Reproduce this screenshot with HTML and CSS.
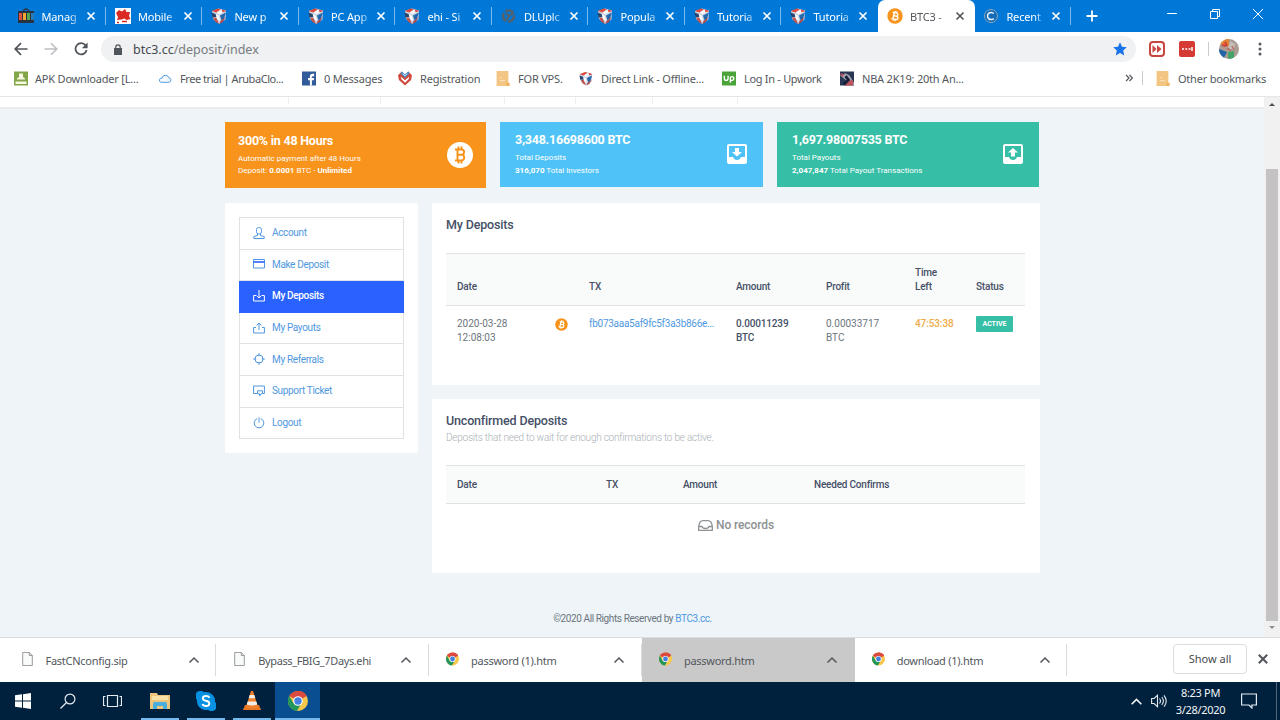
FILE: index.html
```html
<!doctype html>
<html lang="en">
    <head>
        <meta charset="utf-8">
        <title>BTC3 - My Deposits</title>
        <link rel="stylesheet" href="styles.css">
    </head>

    <body>
        <svg class="symbols" width="0" height="0">
            <symbol id="close" viewBox="0 0 10 10"><path d="M1.5 1.5l7 7M8.5 1.5l-7 7" fill="none" stroke="currentColor" stroke-width="1.7"/></symbol>
            <symbol id="cube" viewBox="0 0 16 16">
                <path d="M1 3l7-2.500 7 2-.5 9L8 16l-6-5z" fill="#c9d3e2"/>
                <path d="M.5 3L7 .500l3 1L5.500 4.500zM11 1.500l4.500 1.500L11 4.500z" fill="#dd4a3b"/>
                <path d="M5.500 4.500L10 1.500l2 3L8 6.500z" fill="#f4f6fa"/>
                <path d="M.5 4.500l4 1.500 1 3-4 .5z" fill="#26456f"/>
                <path d="M2 9.500l3.500.5L8 16l-4-2.500z" fill="#c2504b"/>
                <path d="M9 7.500l6-3-2 6-2.500 2z" fill="#2467ad"/>
                <path d="M5 6l3 2 1 5-3-2z" fill="#fff"/>
                <path d="M14.500 9L12 14l-3.500 2 1-3z" fill="#a94a50"/>
            </symbol>
            <symbol id="bitcoin" viewBox="0 0 16 16">
                <circle cx="8" cy="8" r="7.700" fill="#f7931a"/>
                <g transform="rotate(12 8 8)" fill="none" stroke="#fff" stroke-width="1.400"><path d="M5 4.800h4a1.500 1.500 0 0 1 0 3.100H6.500M6.500 7.900h3a1.700 1.700 0 0 1 0 3.400H5M6.600 4.800v6.500M7.200 3v2M9 3v2M7.200 11v2M9 11v2"/></g>
            </symbol>
            <symbol id="folder" viewBox="0 0 12 14"><path d="M0 0h11v11l1 .5V14H0z" fill="#f3c583"/><path d="M3 9h5M3 6h2" stroke="#fadfb5"/><path d="M9 11h3v3H9z" fill="#efb45e"/></symbol>
            <symbol id="chrome" viewBox="0 0 20 20">
                <circle cx="10" cy="10" r="10" fill="#f9c74b"/>
                <path d="M10 10L1.340 5A10 10 0 0 1 18.660 5z" fill="#db4a3e"/>
                <path d="M10 0a10 10 0 0 1 8.660 5H10z" fill="#db4a3e"/>
                <path d="M1.340 5A10 10 0 0 0 9 20l4.300-7.500L10 10 5.700 12.500z" fill="#23965a"/>
                <circle cx="10" cy="10" r="4.800" fill="#fff"/><circle cx="10" cy="10" r="3.700" fill="#427fe0"/>
            </symbol>
            <symbol id="chevron" viewBox="0 0 12 8"><path d="M1.500 6.500L6 2l4.500 4.500" fill="none" stroke="currentColor" stroke-width="1.500"/></symbol>
            <symbol id="file" viewBox="0 0 12 16"><path d="M.5.500h7.500l3.500 3.500v11.500H.5z" fill="#f9fafa" stroke="#8b8e92"/><path d="M8 .5V4h3.500" fill="none" stroke="#8b8e92"/></symbol>
        </svg>

        <div class="tab-strip">
            <div class="tab">
                <svg class="favicon" viewBox="0 0 16 16"><path d="M5 3q3-4 6 0" fill="none" stroke="#2c3446" stroke-width="1.300"/><path d="M0 3h16v12H0z" fill="#29323f"/><path d="M1 5h3v7H1z" fill="#dc523c"/><path d="M5 5h3v7H5z" fill="#f3a535"/><path d="M9 5h3v7H9z" fill="#58a94d"/><path d="M13 5h3v7h-3z" fill="#2978b7"/></svg>
                <span class="tab-title">Manag</span><svg class="tab-close"><use href="#close"/></svg>
            </div>
            <div class="tab">
                <svg class="favicon" viewBox="0 0 16 16"><path d="M0 0h16v16H0z" fill="#fff"/><path d="M1 5l3-3 3 1.500L10 1l1.500 3L15 4l-1 4 1.500 3-4 1-2-1.500-3 1L2 12l1-3z" fill="#d92a24"/><path d="M2 14.500h2M7 13.500h5" stroke="#d92a24" stroke-width="1.500"/></svg>
                <span class="tab-title">Mobile</span><svg class="tab-close"><use href="#close"/></svg>
            </div>
            <div class="tab"><svg class="favicon"><use href="#cube"/></svg><span class="tab-title">New p</span><svg class="tab-close"><use href="#close"/></svg></div>
            <div class="tab"><svg class="favicon"><use href="#cube"/></svg><span class="tab-title">PC App</span><svg class="tab-close"><use href="#close"/></svg></div>
            <div class="tab"><svg class="favicon"><use href="#cube"/></svg><span class="tab-title">ehi - Si</span><svg class="tab-close"><use href="#close"/></svg></div>
            <div class="tab">
                <svg class="favicon" viewBox="0 0 16 16"><circle cx="7.500" cy="8" r="5.500" fill="none" stroke="#52606c" stroke-width="2.600" stroke-dasharray="9 2"/><path d="M5 5l3 3-2 4M8 8l5-3" fill="none" stroke="#52606c" stroke-width="2"/></svg>
                <span class="tab-title">DLUplc</span><svg class="tab-close"><use href="#close"/></svg>
            </div>
            <div class="tab"><svg class="favicon"><use href="#cube"/></svg><span class="tab-title">Popula</span><svg class="tab-close"><use href="#close"/></svg></div>
            <div class="tab"><svg class="favicon"><use href="#cube"/></svg><span class="tab-title">Tutoria</span><svg class="tab-close"><use href="#close"/></svg></div>
            <div class="tab last"><svg class="favicon"><use href="#cube"/></svg><span class="tab-title">Tutoria</span><svg class="tab-close"><use href="#close"/></svg></div>
            <div class="tab active"><svg class="favicon"><use href="#bitcoin"/></svg><span class="tab-title">BTC3 -</span><svg class="tab-close"><use href="#close"/></svg></div>
            <div class="tab">
                <svg class="favicon" viewBox="0 0 16 16"><circle cx="8" cy="8" r="6.500" fill="#146bb6" stroke="#8fa3b8"/><path d="M10.800 5.600a3.600 3.600 0 1 0 0 4.800" fill="none" stroke="#e8f2fb" stroke-width="1.500"/></svg>
                <span class="tab-title">Recent</span><svg class="tab-close"><use href="#close"/></svg>
            </div>
            <svg class="new-tab" viewBox="0 0 12 12"><path d="M6 .5v11M.5 6h11" stroke="#fff" stroke-width="1.800"/></svg>
            <div class="window-buttons">
                <svg viewBox="0 0 10 10"><path d="M0 4.500h10" stroke="#fff"/></svg>
                <svg viewBox="0 0 10 10"><path d="M.5 2.500h7v7h-7zM2.500 2.500v-2h7v7h-2" fill="none" stroke="#fff"/></svg>
                <svg viewBox="0 0 10 10"><path d="M0 0l10 10M10 0L0 10" stroke="#fff"/></svg>
            </div>
        </div>

        <div class="toolbar">
            <svg class="nav-icon" viewBox="0 0 14 14"><path d="M13.500 7H1.500M7 1.200L1.200 7 7 12.800" fill="none" stroke="#50555b" stroke-width="1.700"/></svg>
            <svg class="nav-icon" viewBox="0 0 14 14"><path d="M.5 7h12M7 1.200L12.800 7 7 12.800" fill="none" stroke="#bcbec1" stroke-width="1.600"/></svg>
            <svg class="nav-icon" viewBox="0 0 14 14"><path d="M11.600 3.400A5.600 5.600 0 1 0 12.600 8" fill="none" stroke="#50555b" stroke-width="1.800"/><path d="M13.600.5v5.700H7.900z" fill="#50555b"/></svg>
            <div class="omnibox">
                <svg class="lock" viewBox="0 0 8 11"><path d="M0 4h8v7H0z" fill="#50555b"/><path d="M1.800 4.500V3a2.200 2.200 0 0 1 4.400 0v1.500" fill="none" stroke="#50555b" stroke-width="1.200"/></svg>
                <span class="url"><b>btc3.cc</b>/deposit/index</span>
                <svg class="star" viewBox="0 0 14 14"><path d="M7 .3l2 4.500 4.800.5-3.600 3.300 1 4.900L7 11l-4.200 2.500 1-4.900L.2 5.300 5 4.800z" fill="#1a73e8"/></svg>
            </div>
            <svg class="extension" viewBox="0 0 16 16"><rect x="1" y="1" width="14" height="14" rx="3" fill="#fff" stroke="#c9433f" stroke-width="2"/><path d="M3.500 4l4 4-4 4zM8 4l4.500 4L8 12z" fill="#c9433f"/></svg>
            <svg class="extension second" viewBox="0 0 16 16"><rect width="16" height="16" rx="2" fill="#d63a34"/><path d="M3 8h2M6.300 8h2M9.600 8h2M13 6v4" stroke="#fff" stroke-width="1.500"/></svg>
            <span class="toolbar-divider"></span>
            <svg class="avatar" viewBox="0 0 20 20"><circle cx="10" cy="10" r="10" fill="#aa9c91"/><path d="M1.300 5A10 10 0 0 1 10 0v8z" fill="#e38435"/><path d="M0 10a10 10 0 0 0 5 8.700L8 13z" fill="#1f62a5"/><path d="M9 13l6-1v6.500q-4 2-6 1z" fill="#44a369"/><path d="M11 2l5 3-1 6-6-2z" fill="#c7bdb8"/><path d="M3 6l4 1M6 3l2 4" stroke="#d43e36" stroke-width="2"/><path d="M8 9l4 3M13 7l2 4" stroke="#b96d64" stroke-width="1.500"/></svg>
            <svg class="menu-dots" viewBox="0 0 4 14"><circle cx="2" cy="2" r="1.500"/><circle cx="2" cy="7" r="1.500"/><circle cx="2" cy="12" r="1.500"/></svg>
        </div>

        <div class="bookmarks">
            <div class="bookmark apk"><svg viewBox="0 0 14 14"><path d="M0 0h14v14H0z" fill="#83a649"/><path d="M3 7q4-4 8 0v1H3zM5 2h4v4H5zM1.500 10h11v2.500h-11z" fill="#f7f8df"/></svg><span>APK Downloader [L...</span></div>
            <div class="bookmark aruba"><svg viewBox="0 0 14 14"><path d="M3 10.800H11.300a2.300 2.300 0 0 0-.5-4.500A3.500 3.500 0 0 0 4 6.700a2.100 2.100 0 0 0-1 4.100z" fill="#f5faff" stroke="#539de0"/></svg><span>Free trial | ArubaClo...</span></div>
            <div class="bookmark messages"><svg viewBox="0 0 15 15"><path d="M0 0h15v15H0z" fill="#315b9a"/><path d="M8.500 15V9.500h-2V7h2V5.500q0-3 3-3H13V5h-1.500q-1 0-1 1v1H13l-.4 2.500h-2V15z" fill="#fff"/></svg><span>0 Messages</span></div>
            <div class="bookmark registration"><svg viewBox="0 0 15 15"><path d="M0 4l4-4 3.500 4L11 0l4 4-1 5-6.500 6L1 9z" fill="#cf4a3d"/><path d="M3 5.500l4.500 4L12 5.500 11.500 8l-4 4-4-4z" fill="#fff"/><path d="M4 0l3.500 3L11 0l1.500 2-5 5-5-5z" fill="#438ac7"/><path d="M5 2.500l2.500 2 2.500-2" fill="none" stroke="#fff" stroke-width=".8"/></svg><span>Registration</span></div>
            <div class="bookmark vps"><svg><use href="#folder"/></svg><span>FOR VPS.</span></div>
            <div class="bookmark direct"><svg><use href="#cube"/></svg><span>Direct Link - Offline...</span></div>
            <div class="bookmark upwork"><svg viewBox="0 0 15 15"><path d="M0 0h15v15H0z" fill="#4aa43a"/><path d="M2.500 4.500v3a2 2 0 0 0 4 0v-3M9 12V6.500a2 2 0 1 1 2 3H9" fill="none" stroke="#fff" stroke-width="1.500"/></svg><span>Log In - Upwork</span></div>
            <div class="bookmark nba"><svg viewBox="0 0 15 15"><path d="M0 0h15v15H0z" fill="#263653"/><path d="M0 4l6-2 4 2 5 8v3H9L6 9z" fill="#a3a0ad"/><path d="M8 10l6-1v6H5zM0 2l5 1-3 3z" fill="#bb545c"/><path d="M6 5l3 4-5 5" stroke="#152039" stroke-width="3" fill="none"/></svg><span>NBA 2K19: 20th An...</span></div>
            <svg class="overflow" viewBox="0 0 8 8"><path d="M1 1l3 3-3 3M4.500 1l3 3-3 3" fill="none" stroke="#51565c" stroke-width="1.200"/></svg>
            <span class="bookmark-divider"></span>
            <div class="bookmark other"><svg><use href="#folder"/></svg><span>Other bookmarks</span></div>
        </div>

        <div class="viewport">
            <div class="page">
                <div class="page-nav"><i></i><i></i><i></i><i></i><i></i><i></i><i></i></div>
                <div class="container">
                    <div class="stats">
                        <div class="stat orange">
                            <div><h3>300% in 48 Hours</h3><p>Automatic payment after 48 Hours</p><p>Deposit: <b>0.0001</b> BTC - <b>Unlimited</b></p></div>
                            <svg class="coin" viewBox="0 0 26 26"><circle cx="13" cy="13" r="13" fill="#fff"/><path d="M8 7.500h6.500a2.500 2.500 0 0 1 0 5.200H11M11 12.700h4a3 3 0 0 1 0 5.800H8M10.500 7.500v11M11.500 4.500v3M14.500 4.500v3M11.500 18.500v3M14.500 18.500v3" fill="none" stroke="#f7931a" stroke-width="1.900"/></svg>
                        </div>
                        <div class="stat blue">
                            <div><h3>3,348.16698600 BTC</h3><p>Total Deposits</p><p><b>316,070</b> Total Investors</p></div>
                            <svg class="box" viewBox="0 0 20 20"><path fill-rule="evenodd" d="M2 0h16q2 0 2 2v16q0 2-2 2H2q-2 0-2-2V2Q0 0 2 0zm0 2v11h4q1 3 4 3t4-3h4V2z" fill="#fff"/><path d="M8 4h4v4h3l-5 4.500L5 8h3z" fill="#fff"/></svg>
                        </div>
                        <div class="stat green">
                            <div><h3>1,697.98007535 BTC</h3><p>Total Payouts</p><p><b>2,047,847</b> Total Payout Transactions</p></div>
                            <svg class="box" viewBox="0 0 20 20"><path fill-rule="evenodd" d="M2 0h16q2 0 2 2v16q0 2-2 2H2q-2 0-2-2V2Q0 0 2 0zm0 2v11h4q1 3 4 3t4-3h4V2z" fill="#fff"/><path d="M8 12.500h4v-4h3L10 4 5 8.500h3z" fill="#fff"/></svg>
                        </div>
                    </div>

                    <div class="columns">
                        <div class="sidebar">
                            <ul class="menu">
                                <li><svg viewBox="0 0 12 12"><rect x="3.500" y=".5" width="5" height="6.500" rx="2.300"/><path d="M4.500 7v1.500L.8 9.500v2h10.400v-2L7.500 8.500V7"/></svg><span>Account</span></li>
                                <li><svg viewBox="0 0 12 12"><path d="M.5 1.500h11v8.500H.5z"/><path d="M.5 4h11" stroke="#2962ff" stroke-width="1.600"/></svg><span>Make Deposit</span></li>
                                <li class="active"><svg viewBox="0 0 12 12"><path d="M3 5.500H.6V11h10.800V5.500H9M6 0v7.500M3.500 5.500L6 8l2.500-2.500"/></svg><span>My Deposits</span></li>
                                <li><svg viewBox="0 0 12 12"><path d="M3 5.500H.6V11h10.800V5.500H9M6 8V1M3.500 3.500L6 1l2.500 2.500"/></svg><span>My Payouts</span></li>
                                <li><svg viewBox="0 0 12 12"><circle cx="6" cy="6" r="4"/><path d="M6 .2v3M6 8.800v3M.2 6h3M8.800 6h3"/></svg><span>My Referrals</span></li>
                                <li><svg viewBox="0 0 12 12"><path d="M4 8.500H.6V1h10.800v7.500H10M4.500 5.800h5v3H8L6.500 11V8.800h-2z"/></svg><span>Support Ticket</span></li>
                                <li><svg viewBox="0 0 12 12"><path d="M4.200 1.600a4.800 4.800 0 1 0 3.600 0M6 .3v5.500"/></svg><span>Logout</span></li>
                            </ul>
                        </div>

                        <div class="content">
                            <div class="panel deposits">
                                <h2>My Deposits</h2>
                                <table>
                                    <colgroup><col class="c-date"><col class="c-icon"><col class="c-tx"><col class="c-amount"><col class="c-profit"><col class="c-time"><col></colgroup>
                                    <thead><tr><th>Date</th><th></th><th>TX</th><th>Amount</th><th>Profit</th><th>Time<br>Left</th><th>Status</th></tr></thead>
                                    <tbody><tr>
                                        <td>2020-03-28<br>12:08:03</td>
                                        <td><svg class="tx-coin"><use href="#bitcoin"/></svg></td>
                                        <td class="tx">fb073aaa5af9fc5f3a3b866e...</td>
                                        <td class="amount">0.00011239<br>BTC</td>
                                        <td>0.00033717<br>BTC</td>
                                        <td class="time">47:53:38</td>
                                        <td><span class="badge">ACTIVE</span></td>
                                    </tr></tbody>
                                </table>
                            </div>
                            <div class="panel unconfirmed">
                                <h2>Unconfirmed Deposits</h2>
                                <p class="hint">Deposits that need to wait for enough confirmations to be active.</p>
                                <table>
                                    <colgroup><col class="u-date"><col class="u-tx"><col class="u-amount"><col></colgroup>
                                    <thead><tr><th>Date</th><th>TX</th><th>Amount</th><th>Needed Confirms</th></tr></thead>
                                </table>
                                <div class="empty"><svg viewBox="0 0 15 11"><path d="M.7 6.500Q1.500 .7 5 .7h5q3.500 0 4.300 5.800v3.800H.7zM1 6.500h3q.5 2 3.500 2t3.500-2h3" fill="none" stroke="#8e9194" stroke-width="1.300"/></svg>No records</div>
                            </div>
                        </div>
                    </div>
                    <div class="footer">©2020 All Rights Reserved by <a>BTC3.cc.</a></div>
                </div>
            </div>
            <div class="scrollbar"><span class="arrow up"></span><span class="thumb"></span><span class="arrow down"></span></div>
        </div>

        <div class="downloads">
            <div class="download"><svg class="file"><use href="#file"/></svg><span class="name">FastCNconfig.sip</span><svg class="chevron"><use href="#chevron"/></svg></div>
            <div class="download"><svg class="file"><use href="#file"/></svg><span class="name tight">Bypass_FBIG_7Days.ehi</span><svg class="chevron"><use href="#chevron"/></svg></div>
            <div class="download"><svg class="file"><use href="#chrome"/></svg><span class="name">password (1).htm</span><svg class="chevron"><use href="#chevron"/></svg></div>
            <div class="download hover"><svg class="file"><use href="#chrome"/></svg><span class="name">password.htm</span><svg class="chevron"><use href="#chevron"/></svg></div>
            <div class="download"><svg class="file"><use href="#chrome"/></svg><span class="name">download (1).htm</span><svg class="chevron"><use href="#chevron"/></svg></div>
            <div class="show-all">Show all</div>
            <svg class="close-shelf"><use href="#close"/></svg>
        </div>

        <div class="taskbar">
            <div class="task start"><svg viewBox="0 0 16 16"><path d="M0 2.300L7 1.300V7.500H0zM8 1.200L16 0v7.500H8zM0 8.500h7v6.200l-7-1zM8 8.500h8V16l-8-1.200z" fill="#fff"/></svg></div>
            <div class="task"><svg viewBox="0 0 16 16"><circle cx="10" cy="6" r="4.900" fill="none" stroke="#e5eaf0" stroke-width="1.200"/><path d="M6.500 9.500L.5 15.500" stroke="#e5eaf0" stroke-width="1.300"/></svg></div>
            <div class="task view"><svg viewBox="0 0 19 14"><path d="M4.500 1.500h10v11h-10zM2.500 2.500h-2v9h2M16.500 2.500h2v9h-2" fill="none" stroke="#e5eaf0" stroke-width="1.200"/></svg></div>
            <div class="task open"><svg class="large" viewBox="0 0 20 20"><path d="M0 2h7l1 2h12v14H0z" fill="#efc57d"/><path d="M2 5h16v4H2z" fill="#fae1a8"/><path d="M3 18v-5q0-2 2-2h10q2 0 2 2v5h-4v-3H7v3z" fill="#48aede"/></svg></div>
            <div class="task open"><svg class="large" viewBox="0 0 20 20"><path d="M10 1a9 9 0 0 1 9 10 4.800 4.800 0 0 1-7 7.800A9 9 0 0 1 1 9a4.800 4.800 0 0 1 7-7.800z" fill="#0891e3"/><path d="M13.500 6.800Q12.500 5 10 5 7 5 6.800 7.200q0 1.900 3.200 2.600 3.300.6 3.300 2.700 0 2.500-3.300 2.500-2.800 0-3.500-2" fill="none" stroke="#fff" stroke-width="1.900"/></svg></div>
            <div class="task open"><svg class="large" viewBox="0 0 20 20"><path d="M3 14h14l2 5H1z" fill="#e67825"/><path d="M9 0h2l5 16q-6 3-12 0z" fill="#f0802b"/><path d="M7.700 4h4.600l1 3.200H6.700zM5.700 10.400h8.600l1 3q-5 2-10.600 0z" fill="#f1eee9"/></svg></div>
            <div class="task open current"><svg class="large"><use href="#chrome"/></svg></div>
            <div class="tray">
                <svg class="tray-chevron"><use href="#chevron"/></svg>
                <svg class="speaker" viewBox="0 0 17 14"><path d="M.6 4.500h2.500L6.500 1.300v11.400L3.100 9.500H.6zM8.500 4.500q2 2.500 0 5M10.800 3q3.200 4 0 8M13 1.300q4.500 5.700 0 11.400" fill="none" stroke="#e5eaf0" stroke-width="1.100"/></svg>
                <div class="clock">8:23 PM<br>3/28/2020</div>
                <svg class="notice" viewBox="0 0 16 16"><path d="M.6 1h14.800v11h-4.500v3L8 12H.6z" fill="none" stroke="#e5eaf0" stroke-width="1.200"/></svg>
                <span class="desktop-edge"></span>
            </div>
        </div>
    </body>
</html>
```
FILE: styles.css
```css
* {
    box-sizing: border-box;
}

body {
    display: flex;
    flex-direction: column;
    width: 1280px;
    height: 720px;
    margin: 0;
    overflow: hidden;
    background: #fff;
    color: #53575c;
    font-family: "Noto Sans", "Open Sans", sans-serif;
    font-size: 11px;
}

svg {
    display: block;
    flex: none;
}

.symbols {
    display: none;
}

/* browser tabs */
.tab-strip {
    display: flex;
    height: 32px;
    flex: none;
    padding-left: 9.4px;
    background: #0078d7;
    color: #fff;
}

.tab {
    display: flex;
    align-items: center;
    width: 96.5px;
    flex: none;
    padding-left: 9px;
    background: linear-gradient(#7ab9ee, #7ab9ee) right 7px / 1px 18px no-repeat;
}

.tab.last {
    background: none;
}

.tab.active {
    width: 97.5px;
    margin-right: -1px;
    border-radius: 7px 7px 0 0;
    background: #fff;
    color: #53575c;
}

.favicon {
    width: 16px;
    height: 16px;
}

.tab-title {
    width: 40px;
    margin-left: 7px;
    white-space: nowrap;
    letter-spacing: -0.15px;
    -webkit-mask-image: linear-gradient(90deg, #000 70%, rgba(0, 0, 0, 0.3) 95%);
    mask-image: linear-gradient(90deg, #000 70%, rgba(0, 0, 0, 0.3) 95%);
}

.tab-close {
    width: 10px;
    height: 10px;
    margin-left: 5px;
}

.new-tab {
    width: 12px;
    height: 12px;
    margin: 10px 0 0 15px;
}

.window-buttons {
    display: flex;
    gap: 33px;
    margin: 9px 17px 0 auto;
}

.window-buttons svg {
    width: 10px;
    height: 10px;
}

/* address row */
.toolbar {
    display: flex;
    align-items: center;
    height: 33px;
    flex: none;
    padding: 1px 0 0 14px;
}

.nav-icon {
    width: 14px;
    height: 14px;
    margin-right: 16px;
}

.omnibox {
    display: flex;
    align-items: center;
    width: 1035px;
    height: 26px;
    margin-left: -3px;
    padding: 0 9px 0 13px;
    border-radius: 13px;
    background: #eff1f3;
}

.lock {
    width: 8px;
    height: 11px;
}

.url {
    margin-left: 11px;
    color: #777b80;
    font-size: 12.5px;
}

.url b {
    color: #45494e;
    font-weight: 400;
}

.star {
    width: 14px;
    height: 14px;
    margin-left: auto;
}

.extension {
    width: 16px;
    height: 16px;
    margin-left: 13px;
}

.extension.second {
    margin-left: 14px;
}

.toolbar-divider {
    width: 1px;
    height: 14px;
    margin: 0 10px 0 13px;
    background: #c9cbce;
}

.avatar {
    width: 20px;
    height: 20px;
}

.menu-dots {
    width: 4px;
    height: 14px;
    margin-left: 19px;
    fill: #55595e;
}

.bookmarks {
    display: flex;
    align-items: center;
    height: 32px;
    flex: none;
    padding: 0 14px 5px;
    border-bottom: 1px solid #e4e6e8;
    letter-spacing: -0.2px;
}

.bookmark {
    display: flex;
    align-items: center;
    gap: 8px;
    white-space: nowrap;
}

.bookmark svg {
    width: 14px;
    height: 15px;
}

.apk {
    width: 144px;
    gap: 7px;
}

.aruba {
    width: 144px;
    letter-spacing: -0.45px;
}

.messages { width: 96px; }
.registration { width: 98px; }
.vps { width: 83px; }
.direct { width: 143px; }

.upwork {
    width: 118px;
    letter-spacing: -0.3px;
}

.overflow {
    width: 8px;
    height: 8px;
    margin-left: auto;
}

.bookmark-divider {
    width: 1px;
    height: 14px;
    margin: 0 13px 0 9px;
    background: #c9cbce;
}

/* web page */
.viewport {
    display: flex;
    height: 540px;
    flex: none;
}

.page {
    flex: 1;
    background: #eef4f8;
    color: #6c757d;
    font-family: Roboto, sans-serif;
    font-size: 10px;
}

.page-nav {
    display: flex;
    height: 12px;
    background: #fff;
    border-bottom: 2px solid #e9edf0;
}

.page-nav i {
    height: 7px;
    border-right: 1px solid #edf0f2;
}

.page-nav i:nth-child(1) { width: 289px; }
.page-nav i:nth-child(2) { width: 92px; }
.page-nav i:nth-child(3) { width: 124px; }
.page-nav i:nth-child(4) { width: 71px; }
.page-nav i:nth-child(5) { width: 77px; }
.page-nav i:nth-child(6) { width: 85px; }
.page-nav i:nth-child(7) { border: 0; }

.container {
    width: 815px;
    margin: 13px 0 0 225px;
}

.stats {
    display: grid;
    grid-template-columns: 261px 263px 262px;
    gap: 14px;
    align-items: start;
    height: 81px;
}

.stat {
    display: flex;
    align-items: center;
    justify-content: space-between;
    height: 65px;
    padding: 0 16px 0 15px;
    color: #fff;
}

.stat.orange {
    height: 66px;
    padding: 0 13px 0 13px;
    background: #f8931b;
}

.stat.blue {
    background: #4fc3f7;
}

.stat.green {
    background: #36bea6;
}

.stat h3 {
    margin: 0 0 5px;
    font-size: 12.5px;
    line-height: 15px;
    font-weight: 700;
    letter-spacing: -0.23px;
}

.stat p {
    margin: 0;
    font-size: 8px;
    line-height: 12.5px;
}

.coin {
    width: 26px;
    height: 26px;
}

.box {
    width: 20px;
    height: 20px;
    margin-bottom: 2px;
}

.columns {
    display: flex;
    align-items: flex-start;
    gap: 14px;
}

.sidebar {
    width: 193px;
    height: 250px;
    padding: 14px;
    background: #fff;
    border-radius: 2px;
}

.menu {
    height: 222px;
    margin: 0;
    padding: 0;
    border: 1px solid #dfe3e6;
    list-style: none;
    color: #4f98e0;
    letter-spacing: -0.34px;
}

.menu li {
    display: flex;
    align-items: center;
    gap: 7px;
    height: 31.6px;
    padding: 0 0 1px 13px;
    border-bottom: 1px solid #dfe3e6;
}

.menu li:last-child {
    border: 0;
}

.menu svg {
    width: 12px;
    height: 12px;
    fill: none;
    stroke: currentColor;
}

.menu .active {
    margin: 0 -1px;
    padding-left: 14px;
    border-color: #2962ff;
    background: #2962ff;
    color: #fff;
    font-weight: 500;
}

.content {
    width: 608px;
}

.panel {
    padding: 14px;
    background: #fff;
}

.deposits {
    height: 182px;
    margin-bottom: 14px;
}

.unconfirmed {
    height: 174px;
}

.panel h2 {
    margin: 0;
    color: #455066;
    font-size: 12.5px;
    line-height: 16px;
    font-weight: 500;
    letter-spacing: -0.17px;
}

.hint {
    margin: 3px 0 0;
    line-height: 12px;
    color: #a9afb4;
    font-weight: 300;
    letter-spacing: -0.23px;
}

table {
    width: 579px;
    border-collapse: collapse;
    table-layout: fixed;
    line-height: 14px;
}

.deposits table {
    margin-top: 20px;
}

.unconfirmed table {
    margin-top: 21px;
}

th,
td {
    padding: 11px 0 11px 11px;
    text-align: left;
    vertical-align: top;
}

th {
    padding-top: 12px;
    border-top: 1px solid #dee2e6;
    border-bottom: 1px solid #dee2e6;
    background: #f9fafa;
    color: #455066;
    font-weight: 500;
    letter-spacing: -0.2px;
    vertical-align: bottom;
}

.c-date { width: 98px; }
.c-icon { width: 34px; }
.c-tx { width: 147px; }
.c-amount { width: 90px; }
.c-profit { width: 89px; }
.c-time { width: 61px; }

.u-date { width: 149px; }
.u-tx { width: 77px; }
.u-amount { width: 131px; }

.tx-coin {
    width: 13px;
    height: 13px;
    margin-top: 1px;
}

.tx {
    color: #4f98e0;
    letter-spacing: -0.27px;
}

.amount {
    color: #455066;
    font-weight: 500;
    letter-spacing: -0.15px;
}

.time {
    color: #f0ab4b;
    font-weight: 500;
    letter-spacing: -0.1px;
}

.badge {
    display: block;
    width: 37px;
    height: 16px;
    margin-top: -1px;
    border-radius: 1px;
    background: #36bea6;
    color: #fff;
    font-size: 7px;
    line-height: 16px;
    font-weight: 700;
    text-align: center;
}

.empty {
    display: flex;
    align-items: center;
    justify-content: center;
    gap: 3px;
    margin-top: 13px;
    color: #8e9194;
    font-size: 12px;
    font-weight: 500;
    line-height: 16px;
    letter-spacing: -0.1px;
}

.empty svg {
    width: 15px;
    height: 11px;
}

.footer {
    margin-top: 39px;
    line-height: 14px;
    letter-spacing: -0.4px;
    text-align: center;
}

.footer a {
    color: #4f98e0;
}

.scrollbar {
    display: flex;
    flex-direction: column;
    align-items: center;
    width: 16px;
    background: #f1f1f1;
}

.arrow {
    border: 3.5px solid transparent;
}

.arrow.up {
    margin-top: 3px;
    border-bottom-color: #505050;
}

.thumb {
    width: 12px;
    height: 452px;
    margin-top: 63px;
    background: #c4c2c2;
}

.arrow.down {
    margin-top: 5px;
    border-top-color: #909090;
}

/* download shelf */
.downloads {
    display: flex;
    align-items: center;
    height: 45px;
    flex: none;
    padding-left: 3.5px;
    border-top: 1px solid #dadcde;
}

.download {
    display: flex;
    align-items: center;
    width: 212.8px;
    flex: none;
    height: 44px;
    padding-left: 17px;
    background: linear-gradient(#d9dbdd, #d9dbdd) right center / 1px 32px no-repeat;
}

.download.hover {
    background: #c9c9c9;
}

.file {
    width: 13px;
    height: 14px;
    margin-bottom: 3px;
}

.name {
    width: 142px;
    margin-left: 12px;
    white-space: nowrap;
    letter-spacing: -0.27px;
}

.name.tight {
    letter-spacing: -0.38px;
}

.chevron {
    width: 12px;
    height: 8px;
}

.show-all {
    width: 74px;
    height: 30px;
    margin: 0 10px 2px auto;
    border: 1px solid #dadce0;
    border-radius: 4px;
    color: #46494e;
    line-height: 27px;
    text-align: center;
}

.close-shelf {
    width: 12px;
    height: 12px;
    margin: 0 11px 2px 0;
}

.taskbar {
    display: flex;
    height: 38px;
    flex: none;
    background: #00213d;
}

.task {
    display: flex;
    align-items: center;
    justify-content: center;
    width: 45px;
}

.task svg {
    width: 16px;
    height: 16px;
}

.task.view svg {
    width: 19px;
    height: 14px;
}

.task.open {
    width: 38px;
    margin-left: 8px;
    border-bottom: 2px solid #76b9ed;
}

.view + .task.open {
    margin-left: 6px;
}

.task.open.current {
    width: 45px;
    margin-left: 4px;
    background: #084e90;
}

.task .large {
    width: 20px;
    height: 20px;
    margin-top: 2px;
}

.tray {
    display: flex;
    align-items: center;
    margin-left: auto;
    color: #f3f5f8;
}

.tray-chevron {
    width: 13px;
    height: 9px;
}

.speaker {
    width: 17px;
    height: 14px;
    margin-left: 8px;
}

.clock {
    width: 65px;
    letter-spacing: -0.3px;
    line-height: 17px;
    text-align: center;
}

.notice {
    width: 16px;
    height: 16px;
    margin-left: 8px;
}

.desktop-edge {
    width: 1px;
    height: 38px;
    margin: 0 3px 0 19px;
    background: #52677c;
}
```
